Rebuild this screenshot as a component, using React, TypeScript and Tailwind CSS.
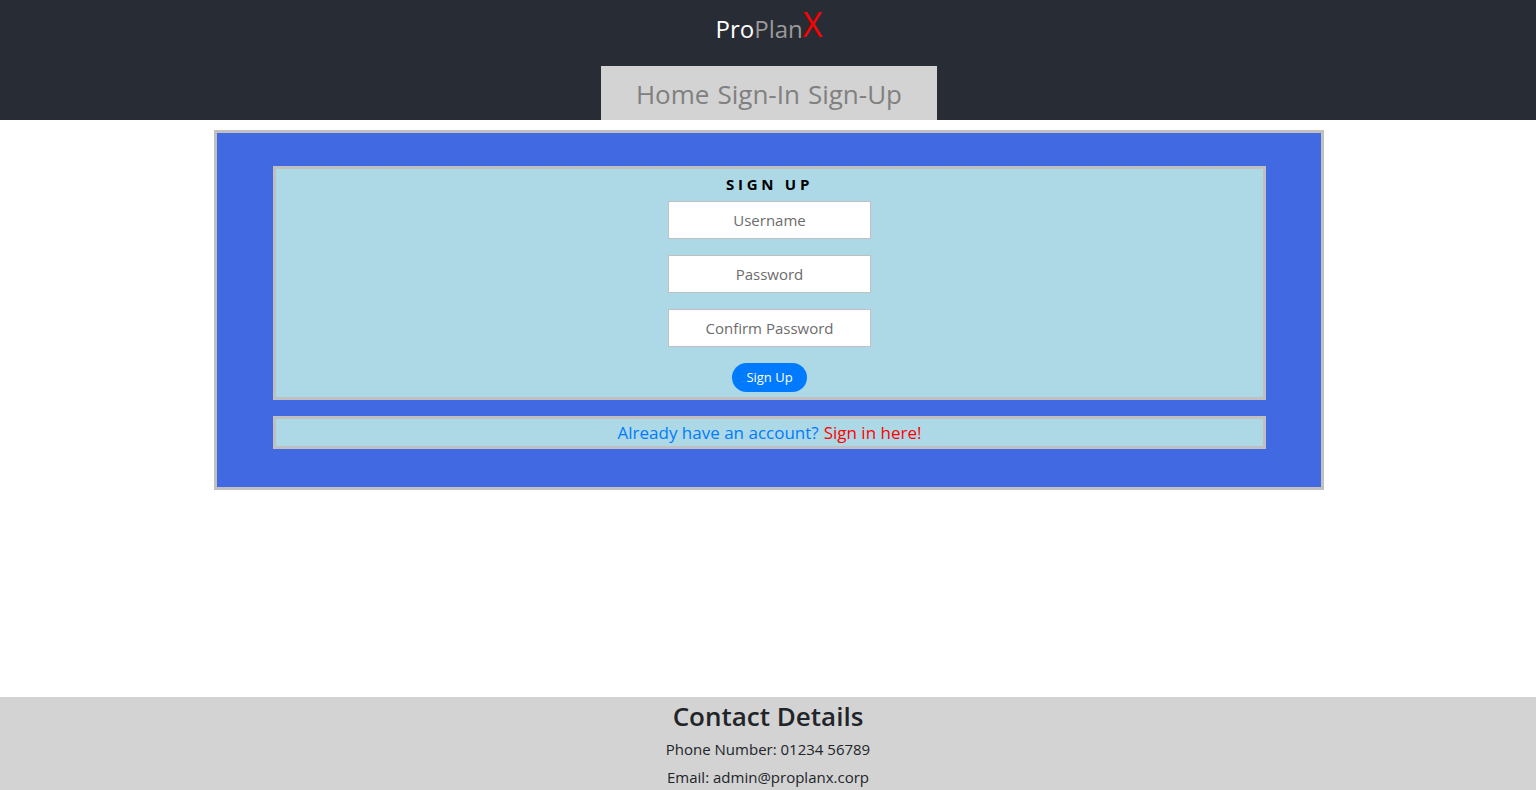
export default function App() {
    return (
        <div className="min-h-screen bg-white flex flex-col font-['Segoe_UI','Open_Sans',sans-serif]">
            {/* header */}
            <header className="h-[120px] bg-[#282c34] flex flex-col items-center pl-[2px]">
                <h1 className="mt-[5px] h-[36px] flex items-end text-[24px] leading-none">
                    <span className="text-white">Pro</span>
                    <span className="text-[#9a9a9a]">Plan</span>
                    <span className="text-[#ff0000] text-[34px] leading-none">X</span>
                </h1>
                <nav className="mt-auto w-[336px] h-[54px] pt-[3px] bg-[#d3d3d3] flex items-center justify-center gap-[8px] text-[26px] text-[#808080]">
                    <a>Home</a>
                    <a>Sign-In</a>
                    <a>Sign-Up</a>
                </nav>
            </header>

            <main className="h-[577px] pt-[10px] pl-[2px]">
                <div className="mx-auto w-[1110px] h-[360px] border-[3px] border-[#c0c0c0] bg-[#4169e1] pt-[33px] pl-[56px]">
                    <div className="w-[993px] h-[234px] border-[3px] border-[#c0c0c0] bg-[#add8e6] flex flex-col items-center">
                        <h2 className="mt-[5px] text-[15px] font-bold tracking-[0.25em] text-black leading-[20px]">SIGN UP</h2>
                        <input
                            placeholder="Username"
                            className="mt-[7px] w-[203px] h-[38px] bg-white border border-[#c0c0c0] text-center text-[15px] placeholder:text-[#6c6c6c] outline-none"
                        />
                        <input
                            placeholder="Password"
                            className="mt-[16px] w-[203px] h-[38px] bg-white border border-[#c0c0c0] text-center text-[15px] placeholder:text-[#6c6c6c] outline-none"
                        />
                        <input
                            placeholder="Confirm Password"
                            className="mt-[16px] w-[203px] h-[38px] bg-white border border-[#c0c0c0] text-center text-[15px] placeholder:text-[#6c6c6c] outline-none"
                        />
                        <button className="mt-[16px] w-[75px] h-[29px] rounded-full bg-[#007bff] text-white text-[13px]">
                            Sign Up
                        </button>
                    </div>
                    <div className="mt-[16px] w-[993px] h-[33px] border-[3px] border-[#c0c0c0] bg-[#add8e6] flex items-center justify-center text-[17px]">
                        <span className="text-[#007bff]">Already have an account?</span>
                        <a className="ml-[5px] text-[#ff0000]">Sign in here!</a>
                    </div>
                </div>
            </main>

            <footer className="bg-[#d3d3d3] flex-1 flex flex-col items-center text-[#212529]">
                <h3 className="mt-[1px] text-[26px] font-semibold leading-[36px]">Contact Details</h3>
                <p className="mt-[5px] text-[15px] leading-[20px]">Phone Number: 01234 56789</p>
                <p className="mt-[8px] text-[15px] leading-[20px]">Email: admin@proplanx.corp</p>
            </footer>
        </div>
    );
}
